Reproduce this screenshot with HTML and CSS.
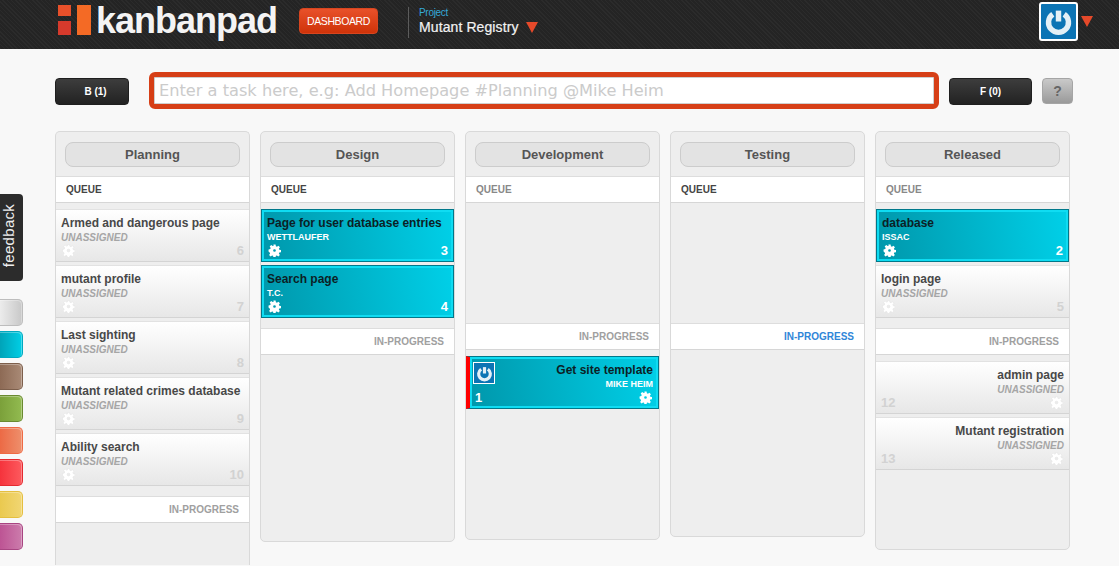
FILE: index.html
```html
<!DOCTYPE html>
<html lang="en">
<head>
    <meta charset="UTF-8">
    <title>Kanbanpad - Mutant Registry</title>
    <link rel="stylesheet" href="styles.css">
</head>
<body>

<svg class="icon-defs" width="0" height="0">
    <defs>
        <symbol id="gear" viewBox="0 0 24 24">
            <path fill-rule="evenodd" d="M10 1h4l.6 3.2 1.9.8 2.7-1.9 2.8 2.8-1.9 2.7.8 1.9 3.1.5v4l-3.2.6-.8 1.9 1.9 2.7-2.8 2.8-2.7-1.9-1.9.8-.5 3.1h-4l-.6-3.2-1.9-.8-2.7 1.9-2.8-2.8 1.9-2.7-.8-1.9L1 14v-4l3.2-.6.8-1.9-1.9-2.7 2.8-2.8 2.7 1.9 1.9-.8zM12 9.500a2.500 2.500 0 1 0 0 5 2.500 2.500 0 0 0 0-5z"/>
        </symbol>
        <symbol id="power" viewBox="0 0 32 32">
            <path d="M9.700 8A11 11 0 1 0 22.300 8" fill="none" stroke="currentColor" stroke-width="6"/>
            <path d="M16 4v12" fill="none" stroke="currentColor" stroke-width="6"/>
        </symbol>
    </defs>
</svg>

<header class="topbar">
    <div class="logo">
        <div class="logo-marks">
            <div class="logo-small">
                <span class="mark-top"></span>
                <span class="mark-bottom"></span>
            </div>
            <span class="mark-tall"></span>
        </div>
        <span class="logo-text">kanbanpad</span>
    </div>
    <a class="dash-btn">DASHBOARD</a>
    <div class="project">
        <span class="project-label">Project</span>
        <div class="project-name">Mutant Registry <span class="arrow"></span></div>
    </div>
    <div class="user-menu">
        <span class="avatar"><svg><use href="#power"/></svg></span>
        <span class="arrow"></span>
    </div>
</header>

<div class="toolbar">
    <button class="dark-btn back-btn">B (1)</button>
    <input class="task-input" type="text" placeholder="Enter a task here, e.g: Add Homepage #Planning @Mike Heim">
    <button class="dark-btn fwd-btn">F (0)</button>
    <button class="help-btn">?</button>
</div>

<div class="main">
    <aside class="rail">
        <div class="feedback"><span>feedback</span></div>
        <div class="swatches">
            <span class="swatch sw-grey"></span>
            <span class="swatch sw-cyan"></span>
            <span class="swatch sw-brown"></span>
            <span class="swatch sw-green"></span>
            <span class="swatch sw-orange"></span>
            <span class="swatch sw-red"></span>
            <span class="swatch sw-yellow"></span>
            <span class="swatch sw-pink"></span>
        </div>
    </aside>

    <div class="board">
        <section class="column col-planning">
            <div class="col-title"><span>Planning</span></div>
            <div class="band">QUEUE</div>
            <div class="cards">
                <div class="card"><h3>Armed and dangerous page</h3><p>UNASSIGNED</p><div class="card-foot"><svg class="gear"><use href="#gear"/></svg><b>6</b></div></div>
                <div class="card"><h3>mutant profile</h3><p>UNASSIGNED</p><div class="card-foot"><svg class="gear"><use href="#gear"/></svg><b>7</b></div></div>
                <div class="card"><h3>Last sighting</h3><p>UNASSIGNED</p><div class="card-foot"><svg class="gear"><use href="#gear"/></svg><b>8</b></div></div>
                <div class="card"><h3>Mutant related crimes database</h3><p>UNASSIGNED</p><div class="card-foot"><svg class="gear"><use href="#gear"/></svg><b>9</b></div></div>
                <div class="card"><h3>Ability search</h3><p>UNASSIGNED</p><div class="card-foot"><svg class="gear"><use href="#gear"/></svg><b>10</b></div></div>
            </div>
            <div class="band band-right">IN-PROGRESS</div>
        </section>

        <section class="column col-design">
            <div class="col-title"><span>Design</span></div>
            <div class="band">QUEUE</div>
            <div class="cards">
                <div class="card card-cyan"><h3>Page for user database entries</h3><p>WETTLAUFER</p><div class="card-foot"><svg class="gear"><use href="#gear"/></svg><b>3</b></div></div>
                <div class="card card-cyan"><h3>Search page</h3><p>T.C.</p><div class="card-foot"><svg class="gear"><use href="#gear"/></svg><b>4</b></div></div>
            </div>
            <div class="band band-right">IN-PROGRESS</div>
        </section>

        <section class="column col-dev">
            <div class="col-title"><span>Development</span></div>
            <div class="band band-muted">QUEUE</div>
            <div class="cards cards-empty"></div>
            <div class="band band-right">IN-PROGRESS</div>
            <div class="cards cards-progress">
                <div class="card card-cyan card-right card-active">
                    <span class="card-avatar"><svg><use href="#power"/></svg></span>
                    <h3>Get site template</h3><p>MIKE HEIM</p>
                    <div class="card-foot"><b>1</b><svg class="gear"><use href="#gear"/></svg></div>
                </div>
            </div>
        </section>

        <section class="column col-testing">
            <div class="col-title"><span>Testing</span></div>
            <div class="band">QUEUE</div>
            <div class="cards cards-empty"></div>
            <div class="band band-right band-blue">IN-PROGRESS</div>
        </section>

        <section class="column col-released">
            <div class="col-title"><span>Released</span></div>
            <div class="band band-muted">QUEUE</div>
            <div class="cards">
                <div class="card card-cyan"><h3>database</h3><p>ISSAC</p><div class="card-foot"><svg class="gear"><use href="#gear"/></svg><b>2</b></div></div>
                <div class="card"><h3>login page</h3><p>UNASSIGNED</p><div class="card-foot"><svg class="gear"><use href="#gear"/></svg><b>5</b></div></div>
            </div>
            <div class="band band-right">IN-PROGRESS</div>
            <div class="cards cards-progress">
                <div class="card card-right"><h3>admin page</h3><p>UNASSIGNED</p><div class="card-foot"><b>12</b><svg class="gear"><use href="#gear"/></svg></div></div>
                <div class="card card-right"><h3>Mutant registration</h3><p>UNASSIGNED</p><div class="card-foot"><b>13</b><svg class="gear"><use href="#gear"/></svg></div></div>
            </div>
        </section>
    </div>
</div>

</body>
</html>
```

FILE: styles.css
```css
* {
    box-sizing: border-box;
}

html, body {
    height: 566px;
    overflow: hidden;
}

body {
    margin: 0;
    background: #f8f8f8;
    color: #444;
    font-family: "Liberation Sans", Arial, sans-serif;
}

.icon-defs {
    display: block;
    height: 0;
}

/* top bar */
.topbar {
    display: flex;
    align-items: flex-start;
    height: 49px;
    padding-left: 58px;
    background-color: #242424;
    background-image: repeating-linear-gradient(45deg, #2b2b2b 0 1px, transparent 1px 3px);
}

.logo {
    display: flex;
    align-items: flex-start;
    width: 241px;
}

.logo-marks {
    display: flex;
    gap: 6px;
    margin-top: 5px;
}

.logo-small {
    display: flex;
    flex-direction: column;
    gap: 5px;
}

.mark-top {
    display: block;
    width: 13px;
    height: 11px;
    background: #e8502a;
}

.mark-bottom {
    display: block;
    width: 13px;
    height: 14px;
    background: #d63a2c;
}

.mark-tall {
    display: block;
    width: 14px;
    height: 30px;
    background: #f46a25;
}

.logo-text {
    margin-left: 5px;
    margin-top: -1px;
    color: #f4f4f4;
    font-size: 36px;
    line-height: 44px;
    font-weight: bold;
    letter-spacing: -1px;
}

.dash-btn {
    width: 79px;
    height: 26px;
    margin-top: 8px;
    background: linear-gradient(#e8512a, #cf3309);
    border: 1px solid #d8451f;
    border-radius: 4px;
    color: #fff;
    font-size: 10.5px;
    line-height: 25px;
    text-align: center;
    letter-spacing: -0.4px;
}

.project {
    margin-top: 7px;
    margin-left: 30px;
    padding-left: 10px;
    height: 31px;
    border-left: 1px solid #5c5c5c;
}

.project-label {
    display: block;
    color: #35a9d8;
    font-size: 10px;
    line-height: 11px;
    letter-spacing: -0.3px;
}

.project-name {
    display: flex;
    align-items: center;
    gap: 7px;
    margin-top: 1px;
    color: #f2f2f2;
    font-size: 14px;
    line-height: 17px;
    font-weight: normal;
    letter-spacing: 0.1px;
    -webkit-text-stroke: 0.2px #f2f2f2;
}

.arrow {
    display: block;
    width: 0;
    height: 0;
    border-left: 6.5px solid transparent;
    border-right: 6.5px solid transparent;
    border-top: 11px solid #e5492a;
}

.user-menu {
    display: flex;
    align-items: center;
    gap: 3px;
    margin-left: auto;
    margin-right: 26px;
    margin-top: 2px;
}

.avatar {
    display: flex;
    align-items: center;
    justify-content: center;
    width: 39px;
    height: 39px;
    background: #0c74b4;
    border: 2px solid #fff;
    border-radius: 3px;
    color: #e4f0f6;
}

.avatar svg {
    width: 29px;
    height: 29px;
}

/* task entry row */
.toolbar {
    display: flex;
    align-items: flex-start;
    height: 82px;
    padding-top: 23px;
    padding-left: 55px;
}

.dark-btn {
    height: 27px;
    margin-top: 6px;
    padding: 0;
    background: linear-gradient(#3d3d3d, #222);
    border: 1px solid #1f1f1f;
    border-radius: 4px;
    color: #fff;
    font-family: inherit;
    font-size: 10px;
    font-weight: bold;
}

.back-btn {
    width: 74px;
    margin-right: 20px;
    padding-left: 7px;
}

.fwd-btn {
    width: 83px;
    margin-left: 10px;
}

.task-input {
    width: 790px;
    height: 37px;
    padding: 0 5px;
    background: #fff;
    border: 5px solid #d63f17;
    border-radius: 6px;
    box-shadow: inset 0 0 0 1px #cfcfcf;
    font-family: "DejaVu Sans", sans-serif;
    font-size: 16.2px;
}

.task-input::placeholder {
    color: #cbcbcb;
    opacity: 1;
}

.help-btn {
    width: 31px;
    height: 26px;
    margin-top: 6px;
    margin-left: 10px;
    padding: 0;
    background: linear-gradient(#c9c9c9, #9a9a9a);
    border: 1px solid #a5a5a5;
    border-radius: 4px;
    color: #666;
    font-family: inherit;
    font-size: 14px;
    font-weight: bold;
}

/* left rail + board */
.main {
    display: flex;
    align-items: flex-start;
}

.rail {
    width: 55px;
    flex: none;
    padding-top: 63px;
}

.feedback {
    display: flex;
    align-items: center;
    justify-content: center;
    width: 23px;
    height: 87px;
    padding: 0 5px 5px 0;
    background: #2c2c2c;
    border-radius: 0 4px 4px 0;
    color: #eee;
}

.feedback span {
    display: block;
    transform: rotate(-90deg);
    font-size: 15px;
    letter-spacing: 0.3px;
}

.swatches {
    display: flex;
    flex-direction: column;
    gap: 5px;
    margin-top: 18px;
}

.swatch {
    display: block;
    width: 23px;
    height: 27px;
    border-style: solid;
    border-width: 1px 1px 1px 0;
    border-radius: 0 5px 5px 0;
    box-shadow: inset -1px 1px 0 rgba(255, 255, 255, 0.3);
}

.sw-grey { background: linear-gradient(90deg, #ececec, #c8c8c8); border-color: #bdbdbd; }
.sw-cyan { background: linear-gradient(90deg, #00a3b8, #00cfe6); border-color: #00a9c0; }
.sw-brown { background: linear-gradient(90deg, #8d6a55, #a98a76); border-color: #7d5f4c; }
.sw-green { background: linear-gradient(90deg, #7ba03a, #92bb50); border-color: #6a8a30; }
.sw-orange { background: linear-gradient(90deg, #ec6a45, #ee8f6c); border-color: #ef6a44; }
.sw-red { background: linear-gradient(90deg, #f5333c, #fd5a5e); border-color: #e42a30; }
.sw-yellow { background: linear-gradient(90deg, #eac94f, #f1d673); border-color: #e5bf3f; }
.sw-pink { background: linear-gradient(90deg, #bd5494, #cc7cac); border-color: #a84582; }

.board {
    display: flex;
    align-items: flex-start;
    gap: 10px;
}

.column {
    width: 195px;
    flex: none;
    padding-top: 10px;
    background: #eee;
    border: 1px solid #d9d9d9;
    border-radius: 5px;
}

/* planning runs off the bottom of the window */
.col-planning {
    height: 434px;
    border-bottom: 0;
    border-radius: 5px 5px 0 0;
}

.col-design { height: 411px; }
.col-dev { height: 409px; }
.col-testing { height: 406px; }
.col-released { height: 419px; }

.col-title {
    height: 34px;
    padding: 0 9px;
}

.col-title span {
    display: block;
    height: 25px;
    background: #e3e3e3;
    border: 1px solid #ccc;
    border-radius: 8px;
    color: #555;
    font-size: 13px;
    font-weight: bold;
    line-height: 23px;
    text-align: center;
}

.band {
    height: 27px;
    padding: 0 10px;
    background: #fff;
    border-top: 1px solid #ddd;
    border-bottom: 1px solid #d6d6d6;
    color: #444;
    font-size: 10px;
    font-weight: bold;
    line-height: 25px;
}

.band-right {
    color: #a0a0a0;
    text-align: right;
}

.band-muted {
    color: #888;
}

.band-blue {
    color: #2f86d8;
}

.cards {
    display: flex;
    flex-direction: column;
    gap: 3px;
    padding: 6px 0 10px;
}

.cards-empty {
    height: 120px;
}

.cards-progress {
    padding: 6px 0 0;
}

/* task cards */
.card {
    position: relative;
    height: 53px;
    padding: 5px 5px 0;
    background: linear-gradient(#fff, #e7e7e7);
    border-top: 1px solid #e2e2e2;
    border-bottom: 1px solid #d4d4d4;
}

.card h3 {
    margin: 0;
    color: #484848;
    font-size: 12px;
    line-height: 16px;
    font-weight: bold;
    white-space: nowrap;
}

.card p {
    margin: 1px 0 -1px;
    color: #a6a6a6;
    font-size: 10px;
    line-height: 12px;
    font-weight: bold;
    font-style: italic;
}

.card-foot {
    display: flex;
    align-items: center;
    justify-content: space-between;
    padding-left: 1px;
    height: 14px;
}

.card-foot b {
    color: #d2d2d2;
    font-size: 13px;
    line-height: 14px;
    margin-top: 2px;
}

.gear {
    width: 13px;
    height: 13px;
    fill: #fff;
    stroke: #e2e2e2;
    stroke-width: 1px;
}

.card-right {
    text-align: right;
}

.card-right .card-foot {
    padding: 0 1px 0 0;
}

.card-cyan {
    padding: 5px 5px 0;
    background: linear-gradient(82deg, #0097ab, #00d0e8);
    border: 1px solid #00788a;
    box-shadow: inset 0 0 0 2px #0fdcf2;
}

.card-cyan h3 {
    color: #0c1f26;
}

.card-cyan p {
    margin: 0;
    color: #fff;
    font-size: 9px;
    font-style: normal;
}

.card-cyan .card-foot b {
    color: #fff;
}

.card-cyan .gear {
    stroke: none;
}

.card-active {
    border-left: 4px solid #f00;
}

.card-avatar {
    position: absolute;
    left: 3px;
    top: 5px;
    display: flex;
    align-items: center;
    justify-content: center;
    width: 22px;
    height: 22px;
    background: #0c74b4;
    border: 1px solid #fff;
    color: #e4f0f6;
}

.card-avatar svg {
    width: 17px;
    height: 17px;
}
```
